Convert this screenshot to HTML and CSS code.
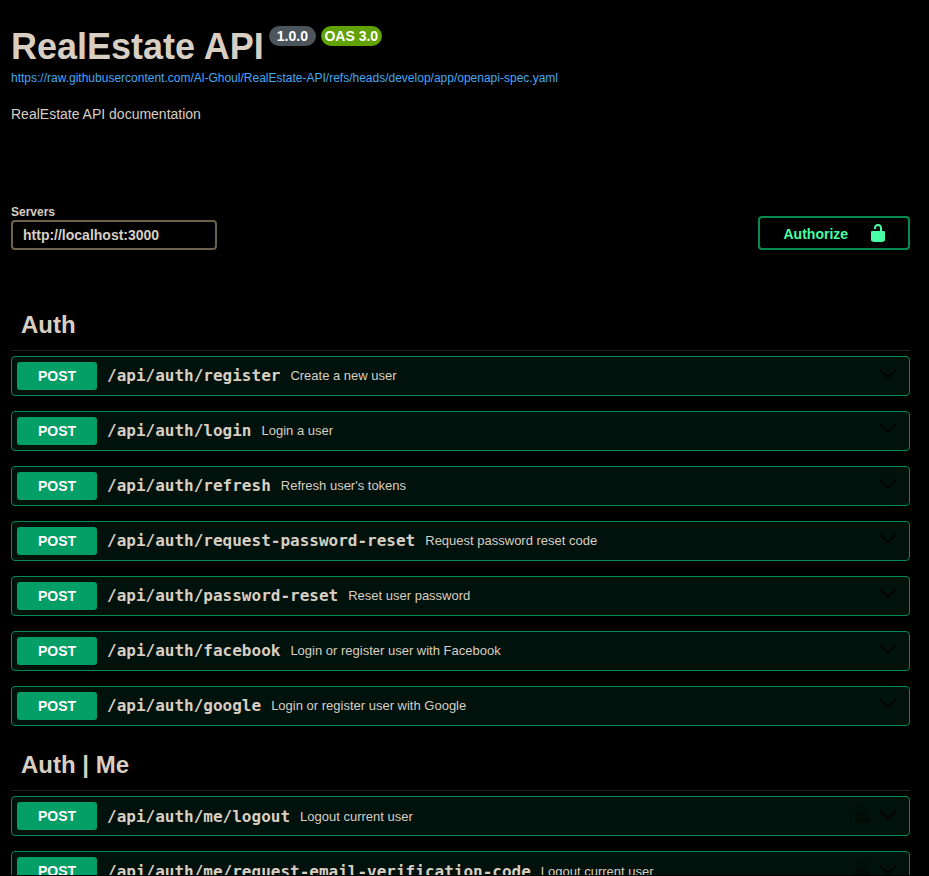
FILE: index.html
```
<!DOCTYPE html>
<html lang="en">
<head>
<meta charset="utf-8">
<title>RealEstate API</title>
<link rel="stylesheet" href="styles.css">
</head>
<body>
<svg class="defs" aria-hidden="true">
  <symbol id="arrow" viewBox="0 0 20 20"><path d="M17.418 6.109c.272-.268.709-.268.979 0s.271.701 0 .969l-7.908 7.83c-.27.268-.707.268-.979 0l-7.908-7.83c-.27-.268-.271-.701 0-.969.271-.268.709-.268.979 0L10 13.25l7.418-7.141z"/></symbol>
  <symbol id="unlocked" viewBox="0 0 20 20"><path d="M15.8 8H14V5.6C14 2.703 12.665 1 10 1 7.334 1 6 2.703 6 5.6V6h2v-.801C8 3.754 8.797 3 10 3c1.203 0 2 .754 2 2.199V8H4c-.553 0-1 .646-1 1.199V17c0 .549.428 1.139.951 1.307l1.197.387C5.672 18.861 6.55 19 7.1 19h5.8c.549 0 1.428-.139 1.951-.307l1.196-.387c.524-.167.953-.757.953-1.306V9.199C17 8.646 16.352 8 15.8 8z"/></symbol>
</svg>
<main class="page">
  <header class="info">
    <div class="title-row">
      <h1>RealEstate API</h1>
      <span class="badge">1.0.0</span>
      <span class="badge oas">OAS 3.0</span>
    </div>
    <a class="spec-link">https://raw.githubusercontent.com/Al-Ghoul/RealEstate-API/refs/heads/develop/app/openapi-spec.yaml</a>
    <p class="description">RealEstate API documentation</p>
  </header>
  <section class="schemes">
    <label class="servers"><span class="servers-title">Servers</span><span class="server-select">http://localhost:3000</span></label>
    <button class="authorize"><span>Authorize</span><svg class="icon"><use href="#unlocked"/></svg></button>
  </section>
  <section class="tag">
    <h2>Auth</h2>
    <div class="ops">
      <div class="op"><span class="method">POST</span><span class="path">/api/auth/register</span><span class="summary">Create a new user</span><svg class="icon arrow"><use href="#arrow"/></svg></div>
      <div class="op"><span class="method">POST</span><span class="path">/api/auth/login</span><span class="summary">Login a user</span><svg class="icon arrow"><use href="#arrow"/></svg></div>
      <div class="op"><span class="method">POST</span><span class="path">/api/auth/refresh</span><span class="summary">Refresh user's tokens</span><svg class="icon arrow"><use href="#arrow"/></svg></div>
      <div class="op"><span class="method">POST</span><span class="path">/api/auth/request-password-reset</span><span class="summary">Request password reset code</span><svg class="icon arrow"><use href="#arrow"/></svg></div>
      <div class="op"><span class="method">POST</span><span class="path">/api/auth/password-reset</span><span class="summary">Reset user password</span><svg class="icon arrow"><use href="#arrow"/></svg></div>
      <div class="op"><span class="method">POST</span><span class="path">/api/auth/facebook</span><span class="summary">Login or register user with Facebook</span><svg class="icon arrow"><use href="#arrow"/></svg></div>
      <div class="op"><span class="method">POST</span><span class="path">/api/auth/google</span><span class="summary">Login or register user with Google</span><svg class="icon arrow"><use href="#arrow"/></svg></div>
    </div>
  </section>
  <section class="tag">
    <h2>Auth | Me</h2>
    <div class="ops">
      <div class="op secured"><span class="method">POST</span><span class="path">/api/auth/me/logout</span><span class="summary">Logout current user</span><svg class="icon lock"><use href="#unlocked"/></svg><svg class="icon arrow"><use href="#arrow"/></svg></div>
      <div class="op secured"><span class="method">POST</span><span class="path">/api/auth/me/request-email-verification-code</span><span class="summary">Logout current user</span><svg class="icon lock"><use href="#unlocked"/></svg><svg class="icon arrow"><use href="#arrow"/></svg></div>
    </div>
  </section>
</main>
</body>
</html>
```
FILE: styles.css
```
* { box-sizing: border-box; }
html { height: 876px; overflow: hidden; background: #000; }
body { margin: 0; height: 875px; overflow: hidden; font-family: "Liberation Sans", Arial, sans-serif; color: #d8cfc2; }
h1, h2, p { margin: 0; }
.defs { display: none; }
.icon { display: block; flex: none; width: 20px; height: 20px; fill: currentColor; }

.page { width: 899px; margin-left: 11px; padding-top: 26px; }

.info { height: 178px; }
.title-row { display: flex; align-items: flex-start; height: 44px; }
h1 { font-size: 36px; line-height: 41px; white-space: nowrap; margin-right: 5px; }
.badge { height: 20px; padding: 0 8px; margin-right: 5px; border-radius: 10px; background: #4b555b; color: #fff; font-size: 14px; font-weight: 700; line-height: 20px; }
.oas { padding: 0 3.5px; background: #61a100; }
.spec-link { display: block; color: #44a8f5; font-size: 12px; line-height: 16px; }
.description { margin-top: 20px; font-size: 14px; line-height: 16px; }

.schemes { display: flex; justify-content: space-between; align-items: flex-end; height: 46px; }
.servers { display: flex; flex-direction: column; width: 206px; font-weight: 700; }
.servers-title { font-size: 12px; line-height: 16px; }
.server-select { height: 30px; padding: 0 10px; border: 2px solid #6e624d; border-radius: 4px; font-size: 14px; line-height: 26px; }
.authorize { display: flex; justify-content: space-between; align-items: center; width: 152px; height: 34px; padding: 0 20px 0 23.5px; border: 2px solid #058b50; border-radius: 4px; background: transparent; color: #48ffa5; font: 700 14px/16px "Liberation Sans", Arial, sans-serif; }
.authorize span { padding-top: 2px; }

.schemes + .tag { margin-top: 50px; }
h2 { height: 51px; padding: 10px; border-bottom: 1px solid #23221a; font-size: 24px; line-height: 30px; }
.ops { display: flex; flex-direction: column; gap: 15px; padding: 5px 0; }
.tag + .tag { margin-top: 9px; }
.op { display: flex; align-items: center; height: 40px; padding: 0 11px 0 5px; border: 1px solid #058b50; border-radius: 4px; background: #01110b; }
.method { width: 80px; height: 28px; margin-right: 10px; border-radius: 3px; background: #039f67; color: #fff; font-size: 14px; font-weight: 700; line-height: 28px; text-align: center; text-shadow: 0 1px 0 rgba(0, 0, 0, .1); }
.path { margin-right: 10px; font: 700 16px/20px "DejaVu Sans Mono", monospace; }
.summary { flex: 1; font-size: 13px; line-height: 16px; }
.arrow { color: #000; margin-bottom: 6px; }
.lock { color: #010c07; margin: 0 6px 4px 0; }
.secured .path, .secured .summary { padding-top: 2px; }
.secured .arrow { margin-bottom: 4px; }
```
